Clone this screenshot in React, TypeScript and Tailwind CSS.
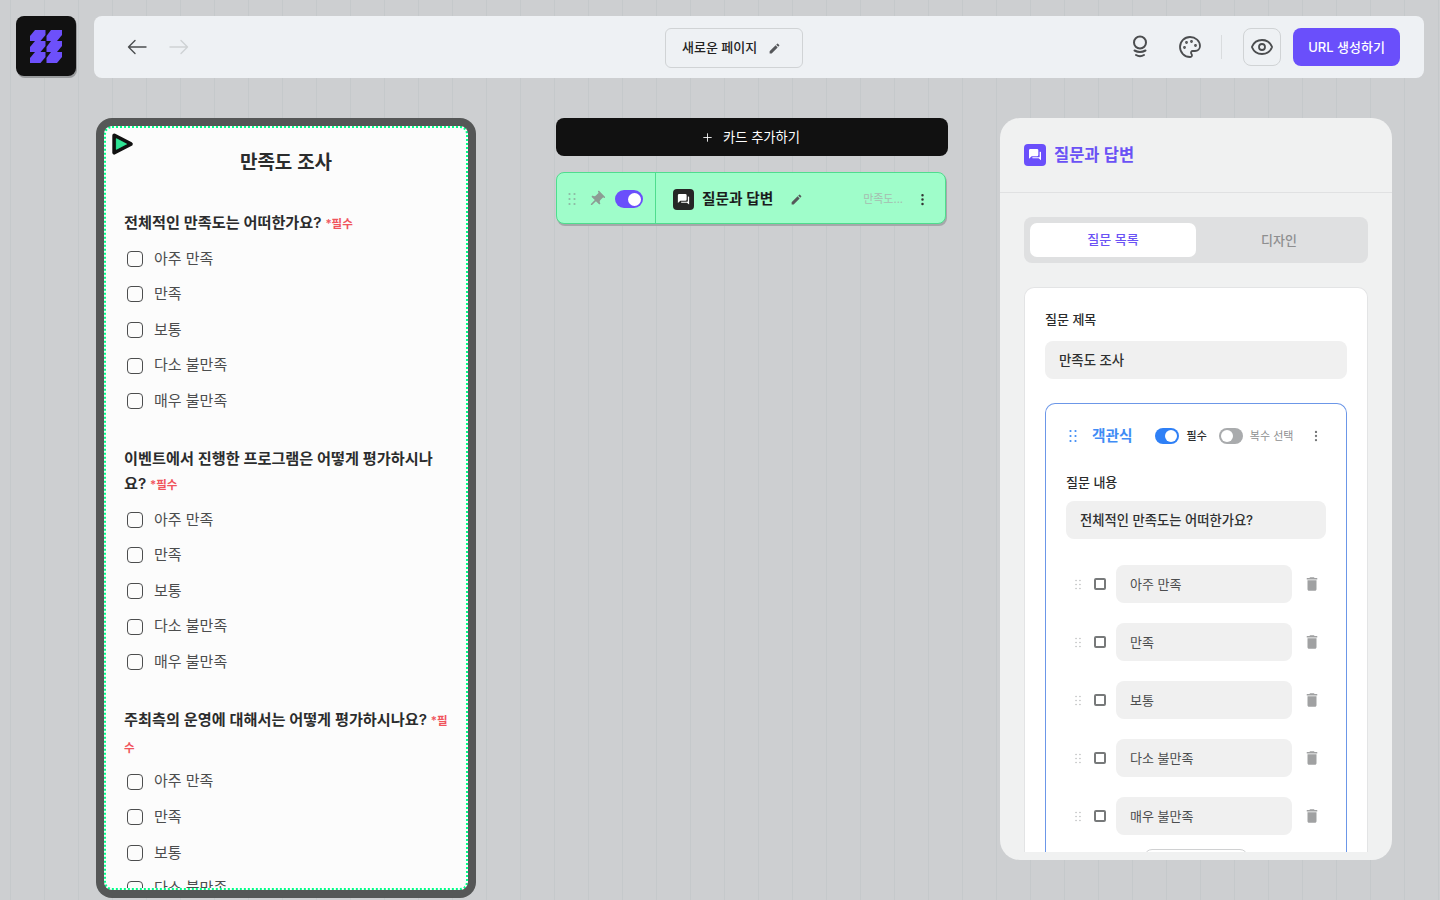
import React from "react";
import { Eye, Palette, Plus, EllipsisVertical } from "lucide-react";
import { MdEdit, MdPushPin, MdDelete } from "react-icons/md";

const OPTIONS = ["아주 만족", "만족", "보통", "다소 불만족", "매우 불만족"];

function Dots({ className, r = 1.1 }: { className?: string; r?: number }) {
  return (
    <svg viewBox="0 0 10 14" className={className} fill="currentColor">
      {[2, 7, 12].map((y) => (
        <g key={y}>
          <circle cx="2.5" cy={y} r={r} />
          <circle cx="7.5" cy={y} r={r} />
        </g>
      ))}
    </svg>
  );
}

function Arrow({ dir, className }: { dir: "left" | "right"; className?: string }) {
  return (
    <svg viewBox="0 0 22 22" className={className} fill="none" stroke="currentColor" strokeWidth="1.4" strokeLinecap="round" strokeLinejoin="round">
      {dir === "left" ? <path d="M20 11H2.5M9 4.5 2.5 11 9 17.5" /> : <path d="M2 11h17.5M13 4.5 19.5 11 13 17.5" />}
    </svg>
  );
}

function Chat({ className }: { className?: string }) {
  return (
    <svg viewBox="0 0 24 24" className={className} fill="currentColor">
      <path d="M5 3h10a2 2 0 0 1 2 2v7a2 2 0 0 1-2 2H7l-4 3.5V5a2 2 0 0 1 2-2z" />
      <path d="M19 7h1a1 1 0 0 1 1 1v12l-3.5-3H9a1 1 0 0 1-1-1v-.5h10a1 1 0 0 0 1-1z" />
    </svg>
  );
}

function Logo() {
  return (
    <svg viewBox="0 0 32 33" className="w-[32px] h-[33px]" fill="#6d50fb">
      {[0, 11, 22].map((y) => (
        <g key={y}>
          <path d={`M5 ${y} H15.5 V${y + 5} L10.5 ${y + 11} H0 V${y + 6} Z`} />
          <path d={`M21 ${y} H32 V${y + 5} L27 ${y + 11} H16.5 V${y + 6} Z`} />
        </g>
      ))}
    </svg>
  );
}

function Bulb() {
  return (
    <svg viewBox="0 0 24 24" className="w-[24px] h-[24px]" fill="none" stroke="#4b4d4f" strokeWidth="2" strokeLinecap="round">
      <circle cx="12" cy="7.5" r="6" />
      <path d="M6.5 15.5 Q12 18.5 17.5 15.5" />
      <path d="M8 20 Q12 22.5 16 20" />
    </svg>
  );
}

function PlayBadge() {
  return (
    <svg viewBox="0 0 24 24" className="absolute left-[14px] top-[14px] w-[24px] h-[24px]" aria-hidden>
      <path d="M4.3 3.4 L20.8 12 L4.3 20.6 Z" fill="#2fe596" stroke="#111" strokeWidth="4" strokeLinejoin="round" />
      <path d="M6.3 6.6 L16.6 12 L6.3 17.4 Z" fill="#2fe596" stroke="#2fe596" strokeWidth="0.6" strokeLinejoin="round" />
    </svg>
  );
}

function Toggle({ on, color, small }: { on: boolean; color: string; small?: boolean }) {
  return (
    <span
      className={`flex items-center rounded-full px-[2px] ${small ? "w-[24px] h-[16px]" : "w-[28px] h-[18px]"} ${on ? "justify-end" : "justify-start"} ${color}`}
    >
      <span className={`rounded-full bg-white ${small ? "w-[12px] h-[12px]" : "w-[13px] h-[13px]"}`} />
    </span>
  );
}

function Question({ title, req, last }: { title: string; req: string; last?: boolean }) {
  return (
    <section className={last ? "" : "mb-[27px]"}>
      <h3 className="text-[15.2px] leading-[25px] font-semibold text-[#2b2c2d]">
        {title} <span className="text-[11.5px] font-semibold text-[#f0545c]">{req}</span>
      </h3>
      <ul className={`flex flex-col ${last ? "mt-[3px]" : "mt-[4px]"}`}>
        {OPTIONS.map((o) => (
          <li key={o} className="flex items-center h-[35.6px] pl-[3px] gap-[11px] text-[15px] text-[#4c4d4e]">
            <span className="w-[16px] h-[16px] rounded-[4px] border border-[#4c4d4e] shrink-0" />
            {o}
          </li>
        ))}
      </ul>
    </section>
  );
}

export default function App() {
  return (
    <div
      className="w-[1440px] h-[900px] overflow-hidden flex flex-col bg-[#cdcfd1] bg-[repeating-linear-gradient(90deg,transparent_0,transparent_10px,#c5c9cb_10px,#c5c9cb_11px,transparent_11px,transparent_34px)]"
      style={{ fontFamily: 'Inter, "Noto Sans CJK KR", sans-serif' }}
    >
      <header className="flex gap-[18px] pt-[16px] px-[16px] h-[78px] shrink-0">
        <div className="w-[60px] h-[60px] rounded-[8px] bg-[#111] flex items-center justify-center shadow-[1px_2px_0_#9a9c9e]">
          <Logo />
        </div>
        <div className="flex-1 h-[62px] rounded-[8px] bg-[#eef1f4] flex items-center relative pl-[32px] pr-[24px]">
          <Arrow dir="left" className="w-[22px] h-[22px] text-[#4b4d4f]" />
          <Arrow dir="right" className="w-[22px] h-[22px] ml-[20px] text-[#cfd2d4]" />
          <div className="absolute left-[571px] top-[12px] w-[138px] h-[40px] rounded-[6px] border border-[#d0d3d5] flex items-center pl-[16px] gap-[11px] text-[13px] font-medium text-[#222]">
            새로운 페이지
            <MdEdit className="w-[13px] h-[13px] text-[#55575a]" />
          </div>
          <div className="ml-auto flex items-center">
            <Bulb />
            <Palette className="w-[24px] h-[24px] ml-[26px] text-[#4b4d4f]" strokeWidth={1.8} />
            <div className="w-px h-[24px] bg-[#d9dcde] ml-[19px]" />
            <div className="w-[38px] h-[38px] ml-[21px] rounded-[8px] border border-[#d0d3d5] flex items-center justify-center">
              <Eye className="w-[24px] h-[24px] text-[#4b4d4f]" strokeWidth={1.8} />
            </div>
            <button className="ml-[12px] w-[107px] h-[38px] rounded-[8px] bg-[#6a4ffb] text-white text-[13px] font-medium pt-px">
              URL 생성하기
            </button>
          </div>
        </div>
      </header>

      <main className="flex items-start pt-[40px] pl-[96px]">
        <div className="relative w-[380px] h-[780px] rounded-[16px] bg-[#555757] p-[8px] shrink-0">
          <div className="w-full h-full rounded-[8px] bg-[#fcfcfc] border-2 border-dotted border-[#00ff88] overflow-hidden px-[18px]">
            <h2 className="pt-[21px] text-center text-[19px] leading-[28px] font-semibold text-[#2b2c2d]">만족도 조사</h2>
            <div className="mt-[33px]">
              <Question title="전체적인 만족도는 어떠한가요?" req="*필수" />
              <Question title="이벤트에서 진행한 프로그램은 어떻게 평가하시나요?" req="*필수" />
              <Question title="주최측의 운영에 대해서는 어떻게 평가하시나요?" req="*필수" last />
            </div>
          </div>
          <PlayBadge />
        </div>

        <div className="w-[392px] ml-[80px] shrink-0 flex flex-col gap-[16px]">
          <button className="h-[38px] rounded-[8px] bg-[#111] text-white text-[13.3px] flex items-center justify-center gap-[9px] pr-[3px] pt-px">
            <Plus className="w-[13px] h-[13px]" strokeWidth={1.6} />
            카드 추가하기
          </button>
          <div className="w-[390px] h-[52px] rounded-[8px] border border-[#4fdd8e] bg-[#9ffdca] flex shadow-[1px_2px_0_#a5a8aa]">
            <div className="w-[99px] border-r border-[#4fdd8e] flex items-center pl-[10px] pt-[2px] shrink-0">
              <Dots className="w-[10px] h-[14px] text-[#8fb8a4]" />
              <MdPushPin className="w-[19px] h-[19px] ml-[10px] text-[#8c9c94] rotate-[45deg]" />
              <span className="ml-[9px]"><Toggle on color="bg-[#6a4ffb]" /></span>
            </div>
            <div className="flex-1 flex items-center pl-[17px] pr-[15px] pt-[2px]">
              <span className="w-[21px] h-[21px] rounded-[4px] bg-[#262626] flex items-center justify-center">
                <Chat className="w-[15px] h-[15px] text-white" />
              </span>
              <span className="ml-[8px] text-[14.7px] font-semibold text-[#1b1c1c]">질문과 답변</span>
              <MdEdit className="ml-[17px] w-[13px] h-[13px] text-[#55595a]" />
              <span className="ml-auto text-[11px] text-[#a6bcb0]">만족도...</span>
              <EllipsisVertical className="ml-[12px] w-[15px] h-[15px] text-[#333]" strokeWidth={2} />
            </div>
          </div>
        </div>

        <aside className="w-[392px] h-[742px] ml-[52px] rounded-[20px] bg-[#f0f1f1] shrink-0 flex flex-col overflow-hidden pb-[8px]">
          <div className="h-[75px] shrink-0 border-b border-[#e0e1e2] flex items-center px-[24px] gap-[8px]">
            <span className="w-[22px] h-[22px] rounded-[4px] bg-[#6a4ffb] flex items-center justify-center">
              <Chat className="w-[16px] h-[16px] text-white" />
            </span>
            <span className="text-[16.5px] font-semibold text-[#6a52f5]">질문과 답변</span>
          </div>
          <div className="flex-1 min-h-0 flex flex-col px-[24px] pt-[24px]">
            <div className="h-[46px] shrink-0 rounded-[8px] bg-[#dfe0e1] p-[6px] flex">
              <div className="w-[166px] rounded-[7px] bg-white flex items-center justify-center text-[13px] font-medium text-[#6a52f5]">질문 목록</div>
              <div className="flex-1 flex items-center justify-center text-[13px] font-medium text-[#8e8f90] pt-px">디자인</div>
            </div>
            <div className="mt-[24px] flex-1 min-h-0 overflow-hidden rounded-t-[10px] border border-b-0 border-[#e3e4e5] bg-white px-[20px] pt-[21px]">
              <div className="text-[13px] leading-[20px] font-medium text-[#2a2b2c]">질문 제목</div>
              <div className="mt-[12px] h-[38px] rounded-[8px] bg-[#f0f0f0] flex items-center px-[14px] pt-[1px] text-[13.4px] font-medium text-[#2f3031]">만족도 조사</div>
              <div className="mt-[24px] rounded-t-[10px] border border-b-0 border-[#6c97e8] px-[20px] pb-[20px]">
                <div className="h-[64px] flex items-center">
                  <Dots className="w-[10px] h-[14px] ml-[2px] text-[#3f8cf5]" />
                  <span className="ml-[14px] text-[14.7px] font-semibold text-[#3f8cf5] pt-px">객관식</span>
                  <span className="ml-[22px]"><Toggle on small color="bg-[#2f80f6]" /></span>
                  <span className="ml-[8px] text-[11px] font-medium text-[#2a2b2c]">필수</span>
                  <span className="ml-[12px]"><Toggle on={false} small color="bg-[#a9abad]" /></span>
                  <span className="ml-[7px] text-[11px] text-[#8e8f90]">복수 선택</span>
                  <EllipsisVertical className="ml-auto mr-[3px] w-[14px] h-[14px] text-[#77797a]" strokeWidth={2} />
                </div>
                <div className="text-[13px] leading-[20px] font-medium text-[#2a2b2c] mt-[4px]">질문 내용</div>
                <div className="mt-[9px] h-[38px] rounded-[8px] bg-[#f0f0f0] flex items-center px-[14px] pt-[1px] text-[13.3px] font-medium text-[#2f3031]">
                  전체적인 만족도는 어떠한가요?
                </div>
                <div className="mt-[26px] flex flex-col gap-[20px]">
                  {OPTIONS.map((o) => (
                    <div key={o} className="flex items-center h-[38px]">
                      <Dots className="w-[8px] h-[11px] ml-[8px] text-[#b4b5b6]" r={0.9} />
                      <span className="ml-[12px] w-[12px] h-[12px] rounded-[2px] border-2 border-[#77797a]" />
                      <span className="ml-[10px] w-[176px] h-[38px] rounded-[8px] bg-[#f0f0f0] flex items-center px-[14px] pt-px text-[13px] text-[#4c4d4e]">{o}</span>
                      <MdDelete className="ml-[11px] w-[18px] h-[18px] text-[#a0a1a2]" />
                    </div>
                  ))}
                </div>
                <div className="mt-[14px] mx-auto w-[104px] h-[38px] rounded-[8px] border border-[#d0d1d2]" />
              </div>
            </div>
          </div>
        </aside>
      </main>
    </div>
  );
}
